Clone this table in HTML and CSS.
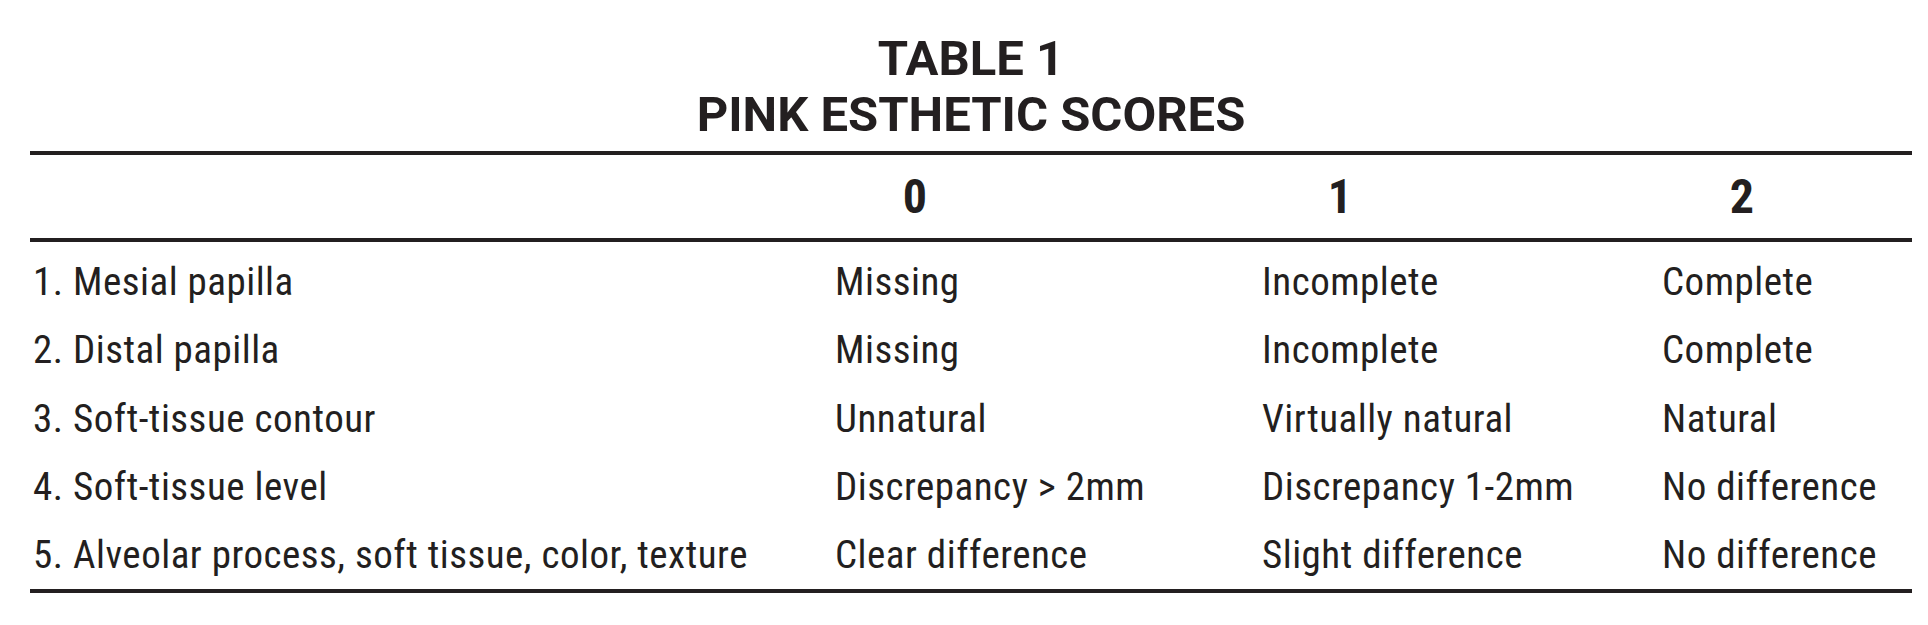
FILE: index.html
```html
<!DOCTYPE html>
<html lang="en">
<head>
<meta charset="utf-8">
<title>Table 1 - Pink Esthetic Scores</title>
<link rel="stylesheet" href="styles.css">
</head>
<body>
<div class="page">
  <h1 class="title">TABLE 1<br>PINK ESTHETIC SCORES</h1>
  <div class="table">
    <div class="row head">
      <div class="cell"></div>
      <div class="cell"><span class="digit d0">0</span></div>
      <div class="cell"><span class="digit d1">1</span></div>
      <div class="cell"><span class="digit d2">2</span></div>
    </div>
    <div class="body">
      <div class="row">
        <div class="cell">1. Mesial papilla</div>
        <div class="cell">Missing</div>
        <div class="cell">Incomplete</div>
        <div class="cell">Complete</div>
      </div>
      <div class="row">
        <div class="cell">2. Distal papilla</div>
        <div class="cell">Missing</div>
        <div class="cell">Incomplete</div>
        <div class="cell">Complete</div>
      </div>
      <div class="row">
        <div class="cell">3. Soft-tissue contour</div>
        <div class="cell">Unnatural</div>
        <div class="cell">Virtually natural</div>
        <div class="cell">Natural</div>
      </div>
      <div class="row">
        <div class="cell">4. Soft-tissue level</div>
        <div class="cell">Discrepancy &gt; 2mm</div>
        <div class="cell">Discrepancy 1-2mm</div>
        <div class="cell">No difference</div>
      </div>
      <div class="row">
        <div class="cell">5. Alveolar process, soft tissue, color, texture</div>
        <div class="cell">Clear difference</div>
        <div class="cell">Slight difference</div>
        <div class="cell">No difference</div>
      </div>
    </div>
  </div>
</div>
</body>
</html>
```

FILE: styles.css
```css
html, body {
  margin: 0;
  padding: 0;
  background: #ffffff;
}

body {
  color: #231f20;
  font-family: "Roboto Condensed", Roboto, "Liberation Sans Narrow", sans-serif;
  font-stretch: 75%;
}

.page {
  width: 1882px;
  margin-left: 30px;
  padding-top: 31px;
}

.title {
  margin: 0;
  font-family: Roboto, "Liberation Sans", sans-serif;
  font-stretch: 90%;
  font-weight: 700;
  font-size: 49px;
  line-height: 55.5px;
  text-align: center;
  letter-spacing: 0;
}

.table {
  margin-top: 9px;
  border-top: 4px solid #231f20;
  border-bottom: 4px solid #231f20;
}

.row {
  display: grid;
  grid-template-columns: 805px 427px 400px 1fr;
  align-items: center;
}

.head {
  height: 83px;
  border-bottom: 4px solid #231f20;
}

.digit {
  display: inline-block;
  font-weight: 700;
  font-size: 48px;
  line-height: 1;
  text-align: center;
}

.d0 { width: 160px; }
.d1 { width: 156px; }
.d2 { width: 160px; }

.body {
  padding-top: 6px;
}

.body .row {
  height: 68.25px;
  font-size: 39px;
  letter-spacing: 0.5px;
  line-height: 68px;
  white-space: nowrap;
}

.body .cell:first-child {
  padding-left: 3px;
}
```
